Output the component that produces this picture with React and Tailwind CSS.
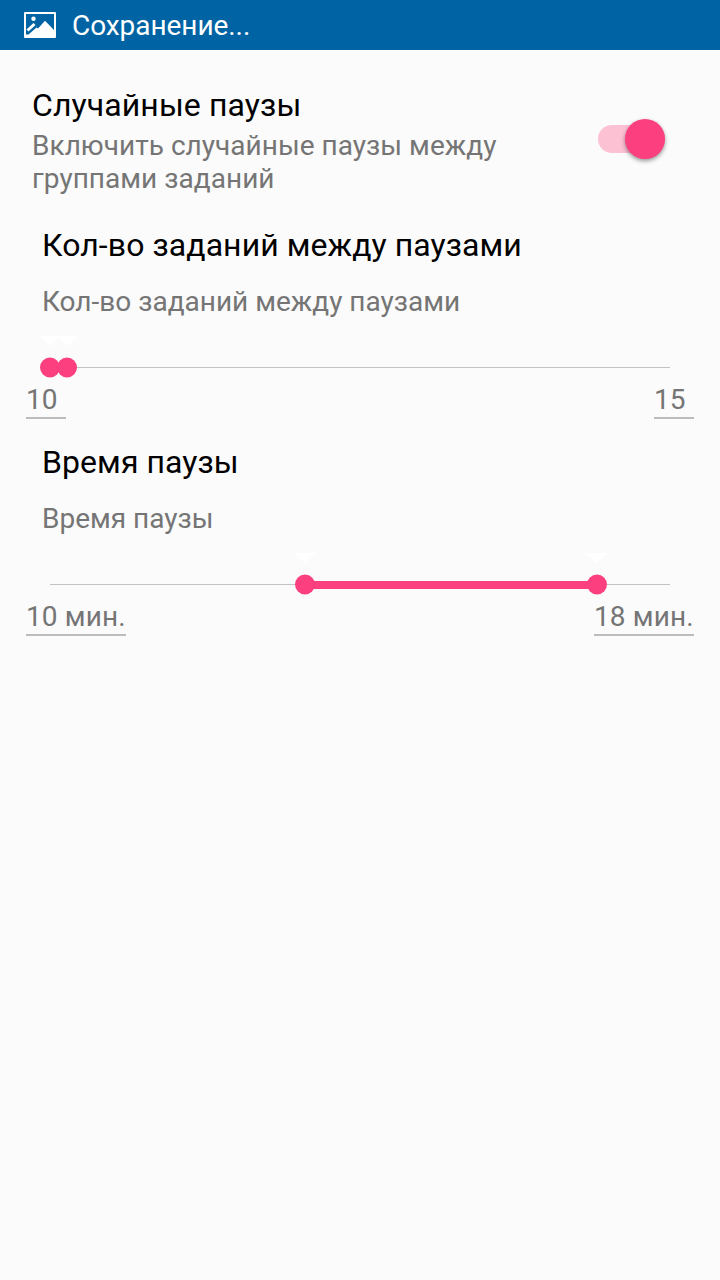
const sections = [
  { title: 'Кол-во заданий между паузами', min: '10', max: '15', from: 0, to: 16.5, field: 'w-10' },
  { title: 'Время паузы', min: '10 мин.', max: '18 мин.', from: 255, to: 547, field: 'w-[100px]' },
]

function PictureIcon() {
  return (
    <svg width="34" height="28" viewBox="0 0 34 28" className="shrink-0">
      <path
        fill="#fff"
        fillRule="evenodd"
        d="M2 1 H32 Q33 1 33 2 V26 Q33 27 32 27 H2 Q1 27 1 26 V2 Q1 1 2 1 Z M3 3 V23.5 H5.5 L13.5 16.5 L15 17.5 L22 9.7 L31 19 V3 Z"
      />
      <circle cx="10.5" cy="7.8" r="2.2" fill="#fff" />
      <path d="M4.5 19.5 L11.5 13" stroke="#fff" strokeWidth="3" />
    </svg>
  )
}

function Switch() {
  return (
    <div className="relative mt-[39px] h-7 w-[67px] rounded-full bg-[#fdc1d4]">
      <div className="absolute -top-1.5 right-0 size-10 rounded-full bg-[#fb3f7f] shadow-[0_2px_4px_rgba(0,0,0,0.4)]" />
    </div>
  )
}

function Thumb({ x }) {
  return (
    <div className="absolute top-0 -ml-[11px]" style={{ left: x }}>
      <svg width="22" height="44" viewBox="0 0 22 44">
        <path d="M0 2 H22 L11 12 Z" fill="#fff" />
        <circle cx="11" cy="33.5" r="10" fill="#fb3f7f" />
      </svg>
    </div>
  )
}

function RangeSlider({ from, to }) {
  return (
    <div className="relative mx-[50px] h-11 pt-[33px]">
      <div className="h-px bg-[#c2c2c2]" />
      <div className="absolute top-[30px] h-2 bg-[#fb3f7f]" style={{ left: from, width: to - from }} />
      <Thumb x={from} />
      <Thumb x={to} />
    </div>
  )
}

function Section({ title, min, max, from, to, field }) {
  return (
    <section className="h-[217px]">
      <h2 className="px-[42px] text-[32px] leading-[38px] tracking-[0.07px]">{title}</h2>
      <p className="mt-[21px] mb-4 px-[42px] text-[28px] leading-[33px] text-[#757575]">{title}</p>
      <RangeSlider from={from} to={to} />
      <div className="mx-[26px] mt-[5px] flex justify-between text-[28px] leading-[34px] tracking-[0.12px] text-[#757575]">
        <div className={`${field} border-b-2 border-[#bcbcbc] whitespace-nowrap`}>{min}</div>
        <div className={`${field} border-b-2 border-[#bcbcbc] whitespace-nowrap`}>{max}</div>
      </div>
    </section>
  )
}

export default function App() {
  return (
    <div className="min-h-screen bg-[#fbfbfb] font-['Roboto',sans-serif] text-black">
      <header className="flex h-[50px] items-center gap-[15px] bg-[#0063a3] pl-[23px] text-[28px] text-white">
        <PictureIcon />
        <span className="pt-0.5 tracking-[-0.06px]">Сохранение...</span>
      </header>
      <div className="flex h-[176px] justify-between pr-[55px] pl-8">
        <div className="w-[500px] pt-9">
          <h2 className="text-[32px] leading-[38px] tracking-[0.1px]">Случайные паузы</h2>
          <p className="mt-[5px] text-[28px] leading-[33px] tracking-[0.03px] text-[#757575]">
            Включить случайные паузы между группами заданий
          </p>
        </div>
        <div className="pt-9">
          <Switch />
        </div>
      </div>
      {sections.map((s) => (
        <Section key={s.title} {...s} />
      ))}
    </div>
  )
}
